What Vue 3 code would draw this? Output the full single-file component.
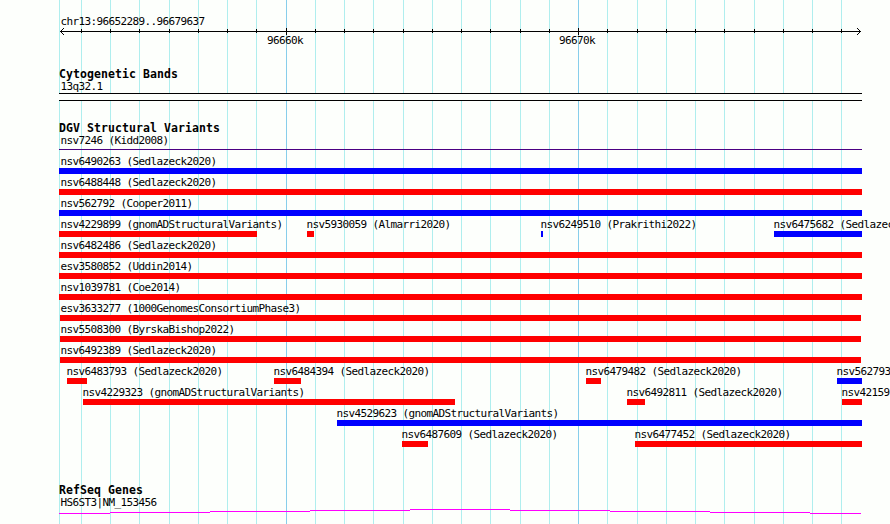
<template>
  <div class="browser">
    <!-- Vertical guides behind all the tracks -->
    <svg class="guides" width="890" height="524" shape-rendering="crispEdges">
      <rect v-for="x in guides" :key="x" :x="x" y="0" width="1" height="524" :fill="isMajor(x) ? '#87ceeb' : '#afeeee'" />
    </svg>

    <!-- Ruler -->
    <svg class="ruler" width="890" height="50" shape-rendering="crispEdges">
      <text x="60.5" y="25" class="ruler-text">chr13:96652289..96679637</text>
      <rect x="60" y="31" width="801" height="1" />
      <template v-for="x in guides.slice(1)" :key="x">
        <rect v-if="isMajor(x)" :x="x" y="28" width="1" height="7" />
        <rect v-else :x="x" y="29" width="1" height="4" />
      </template>
      <!-- Arrow heads, one pixel per step -->
      <template v-for="n in 3" :key="n">
        <rect :x="60 + n" :y="31 - n" width="1" height="1" />
        <rect :x="60 + n" :y="31 + n" width="1" height="1" />
        <rect :x="860 - n" :y="31 - n" width="1" height="1" />
        <rect :x="860 - n" :y="31 + n" width="1" height="1" />
      </template>
      <text x="267" y="44" class="ruler-text">96660k</text>
      <text x="559" y="44" class="ruler-text">96670k</text>
    </svg>

    <section class="track cytoband">
      <h2>Cytogenetic Bands</h2>
      <p class="caption">13q32.1</p>
      <div class="band"></div>
    </section>

    <section class="track variants">
      <h2>DGV Structural Variants</h2>
      <p class="caption">nsv7246 (Kidd2008)</p>
      <div class="thin-line"></div>
      <div v-for="(row, i) in rows" :key="i" class="row">
        <div v-for="f in row" :key="f.name" class="feature" :style="{ marginLeft: f.gap + 'px', width: f.width + 'px' }">
          <span class="label" :class="{ shifted: f.start < 61 }">{{ f.name }}</span>
          <div class="bar" :class="f.type" :style="{ marginLeft: f.inset + 'px', width: f.width - f.inset + 'px' }"></div>
        </div>
      </div>
    </section>

    <section class="track genes">
      <h2>RefSeq Genes</h2>
      <p class="caption">HS6ST3|NM_153456</p>
      <svg class="gene" width="803" height="5" shape-rendering="crispEdges">
        <rect v-for="s in geneSteps" :key="s[0]" :x="s[0]" :y="s[2]" :width="s[1] - s[0]" height="1" />
      </svg>
    </section>
  </div>
</template>

<script setup>
const LEFT = 59

const guides = [
  59, 81, 110, 139, 169, 198, 227, 256, 286, 315, 344, 373, 403, 432,
  461, 490, 520, 549, 578, 607, 637, 666, 695, 724, 754, 783, 812, 841
]

function isMajor(x) {
  return x === 286 || x === 578
}

// name, start, end, type
const variants = [
  [['nsv6490263 (Sedlazeck2020)', 59, 862, 'gain']],
  [['nsv6488448 (Sedlazeck2020)', 59, 862, 'loss']],
  [['nsv562792 (Cooper2011)', 59, 862, 'gain']],
  [
    ['nsv4229899 (gnomADStructuralVariants)', 59, 257, 'loss'],
    ['nsv5930059 (Almarri2020)', 307, 314, 'loss'],
    ['nsv6249510 (Prakrithi2022)', 541, 543, 'gain'],
    ['nsv6475682 (Sedlazec', 774, 862, 'gain']
  ],
  [['nsv6482486 (Sedlazeck2020)', 59, 862, 'loss']],
  [['esv3580852 (Uddin2014)', 59, 862, 'loss']],
  [['nsv1039781 (Coe2014)', 59, 862, 'loss']],
  [['esv3633277 (1000GenomesConsortiumPhase3)', 60, 861, 'loss']],
  [['nsv5508300 (ByrskaBishop2022)', 60, 861, 'loss']],
  [['nsv6492389 (Sedlazeck2020)', 60, 861, 'loss']],
  [
    ['nsv6483793 (Sedlazeck2020)', 67, 87, 'loss'],
    ['nsv6484394 (Sedlazeck2020)', 274, 301, 'loss'],
    ['nsv6479482 (Sedlazeck2020)', 586, 601, 'loss'],
    ['nsv562793', 837, 862, 'gain']
  ],
  [
    ['nsv4229323 (gnomADStructuralVariants)', 83, 455, 'loss'],
    ['nsv6492811 (Sedlazeck2020)', 627, 645, 'loss'],
    ['nsv42159', 842, 862, 'loss']
  ],
  [['nsv4529623 (gnomADStructuralVariants)', 337, 862, 'gain']],
  [
    ['nsv6487609 (Sedlazeck2020)', 402, 428, 'loss'],
    ['nsv6477452 (Sedlazeck2020)', 635, 862, 'loss']
  ]
]

// Turn start/end into gap from the previous feature and width
const rows = variants.map(row => {
  let cursor = LEFT
  return row.map(([name, start, end, type]) => {
    const inset = start === LEFT + 1 ? 1 : 0
    const gap = start - inset - cursor
    cursor = end
    return { name, start, type, inset, gap, width: end - start + inset }
  })
})

// from, to, y
const geneSteps = [
  [0, 51, 4],
  [51, 151, 3],
  [151, 251, 2],
  [251, 351, 1],
  [351, 451, 0],
  [451, 551, 1],
  [551, 651, 2],
  [651, 751, 3],
  [751, 802, 4]
]
</script>

<style>
body {
  margin: 0;
  background: #fdfffc;
}
</style>

<style scoped>
.browser {
  position: relative;
  width: 890px;
  height: 524px;
  overflow: hidden;
  background: #fdfffc;
  color: #000;
  font-family: 'DejaVu Sans Mono', 'Liberation Mono', monospace;
  font-size: 11px;
  letter-spacing: -0.622px;
}

.guides {
  position: absolute;
  top: 0;
  left: 0;
}

.ruler {
  position: relative;
  display: block;
}

.ruler-text {
  font-size: 11px;
}

.track {
  position: relative;
  padding-left: 59px;
}

.cytoband {
  padding-top: 18px;
}

.variants {
  padding-top: 21px;
}

.genes {
  padding-top: 37px;
}

h2 {
  margin: 0;
  height: 12px;
  line-height: 12px;
  font-size: 11.5px;
  font-weight: bold;
  letter-spacing: 0.077px;
}

.caption {
  margin: 0;
  padding-left: 1.5px;
  height: 13px;
  line-height: 13px;
}

.band {
  box-sizing: border-box;
  width: 803px;
  height: 8px;
  border-top: 1px solid #000;
  border-bottom: 1px solid #000;
  background: #fdfffc;
}

.thin-line {
  width: 803px;
  height: 1px;
  margin: 2px 0 3px;
  background: #4b0082;
}

.row {
  display: flex;
  height: 21px;
}

.feature {
  flex: none;
}

.label {
  display: block;
  height: 15px;
  line-height: 17px;
  white-space: nowrap;
  margin-left: -0.5px;
}

.label.shifted {
  margin-left: 1.5px;
}

.bar {
  height: 6px;
}

.gain {
  background: #0000ff;
}

.loss {
  background: #ff0000;
}

.gene {
  display: block;
  fill: #ff00ff;
}
</style>
